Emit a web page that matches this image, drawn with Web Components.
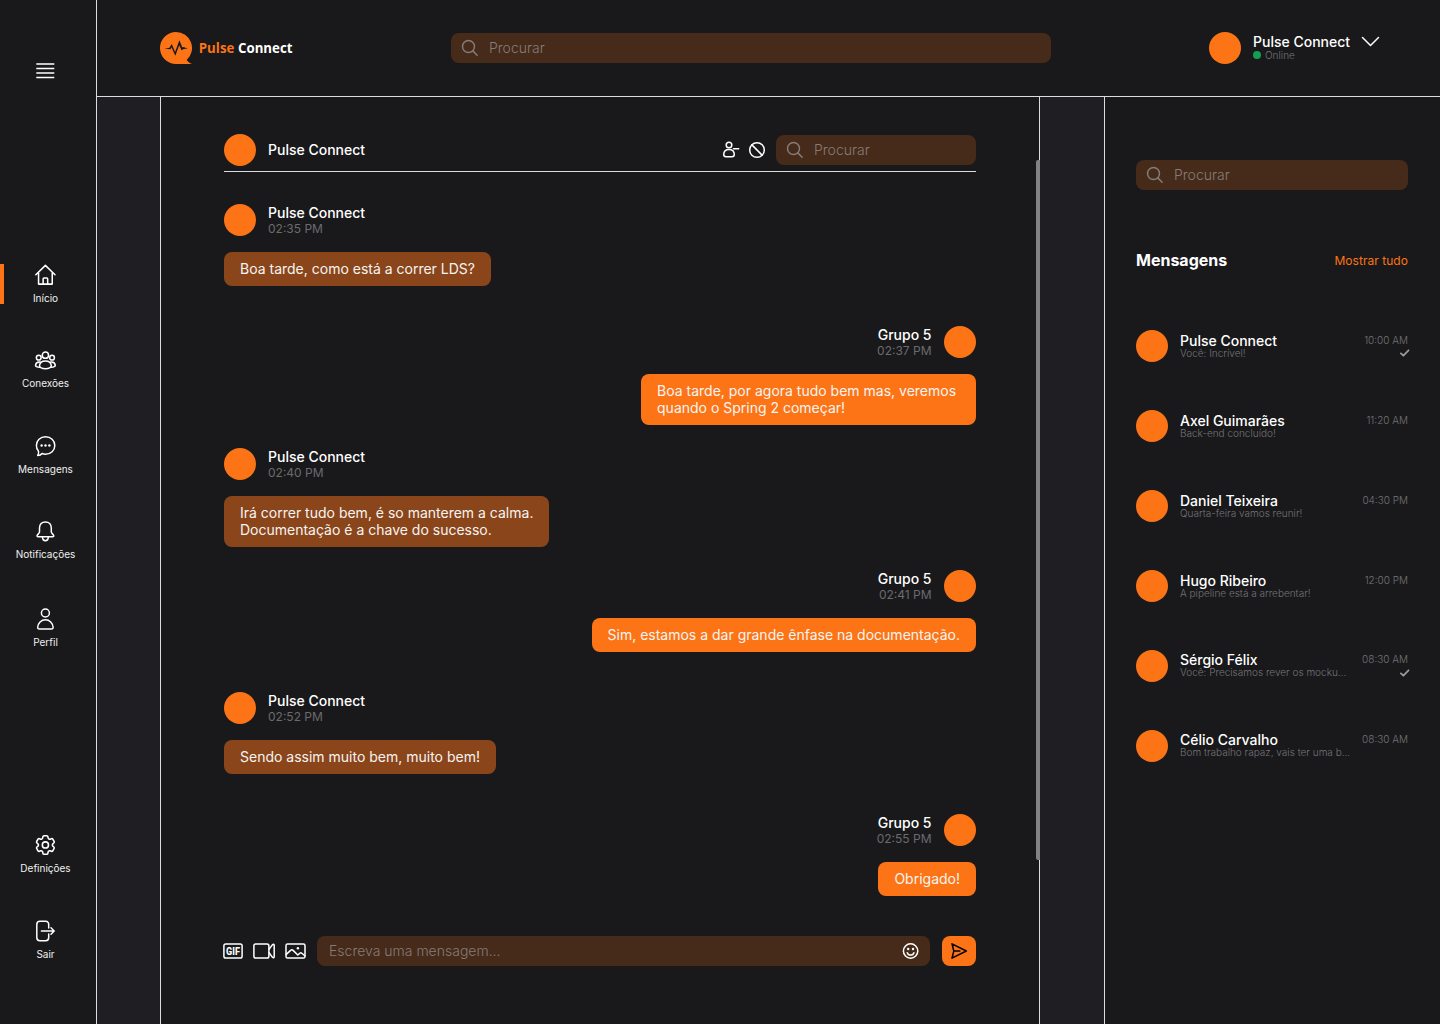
<!DOCTYPE html>
<html lang="pt">
<head>
<meta charset="utf-8">
<title>Pulse Connect</title>
<style>
html,body{margin:0;height:100%;background:#19191b}
body{--orange:#fc7416;--bg:#19191b;--gutter:#1e1e23;--line:#dcdcdc;--field:#462a1a;--muted:#857c77;--dim:#747476;
font:400 14px/17px Inter,"Liberation Sans",sans-serif;color:#fff;overflow:hidden}
</style>
</head>
<body>
<pulse-app></pulse-app>
<script>
const ICONS = {
  menu: [24,24,'<path d="M3 5h18M3 9.500h18M3 14h18M3 18.500h18" stroke-width="1.5" stroke-linecap="butt"/>'],
  home: [24,24,'<g transform="translate(.6 .6) scale(.95)" stroke-width="1.6"><path d="M1.900 11.700 12 1.900l10.100 9.800M4.800 9.600v12h14.400v-12M9.600 21.300v-5.200q0-.9.9-.9h3q.9 0 .9.900v5.200"/></g>'],
  people: [24,24,'<g transform="translate(.6 1.4) scale(.95)" stroke-width="1.6"><circle cx="12" cy="6.100" r="3.300"/><circle cx="5" cy="8.700" r="2.500"/><circle cx="19" cy="8.700" r="2.500"/><path d="M12 12.200c3.500 0 5.900 2 6.200 4.800.1 2.100-2.600 3.300-6.200 3.300s-6.300-1.200-6.200-3.300c.3-2.800 2.700-4.800 6.200-4.800zM6.300 13.400c-2.600-.2-4.400 1-4.700 3.300-.1 1.200 1.500 2.100 4.300 2.200M17.700 13.400c2.600-.2 4.400 1 4.700 3.300.1 1.200-1.500 2.100-4.300 2.200"/></g>'],
  chat: [24,24,'<path d="M12.100 2.800c5.300 0 9.300 3.700 9.300 8.700s-4 8.700-9.300 8.700c-1.500 0-2.300-.2-3.500-.7-1 1.500-2.300 1.900-4.300 1.900.9-1.200 1.200-2.500.8-4.100-1.400-1.500-2.100-3.500-2.100-5.800 0-5 3.900-8.700 9.100-8.700z"/><g fill="currentColor" stroke="none"><circle cx="8.200" cy="11.500" r="1.200"/><circle cx="12.100" cy="11.500" r="1.200"/><circle cx="16" cy="11.500" r="1.200"/></g>'],
  bell: [24,24,'<path d="M12 2.900c-3.600 0-5.900 2.500-5.900 6V13c0 1.500-2.500 2.300-2.500 4.100 0 .5.400.7 1 .7h14.800c.6 0 1-.2 1-.7 0-1.800-2.500-2.600-2.500-4.100V8.900c0-3.500-2.300-6-5.900-6zM9 18.300c.2 2.300 1.300 3.500 3 3.500s2.800-1.200 3-3.500"/>'],
  user: [24,24,'<circle cx="12" cy="6" r="4"/><path d="M12 12.800c4.200 0 7.400 3.200 7.700 7.400.1 1.100-.5 1.700-1.600 1.700H5.900c-1.100 0-1.700-.6-1.600-1.700.3-4.200 3.500-7.400 7.700-7.400z"/>'],
  gear: [24,24,'<g transform="translate(-.4 -.4) scale(1.033)"><circle cx="12" cy="12" r="3"/><path d="M9.594 3.940c.09-.542.56-.94 1.110-.94h2.593c.55 0 1.020.398 1.110.94l.213 1.281c.063.374.313.686.645.87.074.04.147.083.22.127.325.196.72.257 1.075.124l1.217-.456a1.125 1.125 0 0 1 1.370.49l1.296 2.247a1.125 1.125 0 0 1-.26 1.431l-1.003.827c-.293.241-.438.613-.43.992a7.723 7.723 0 0 1 0 .255c-.008.378.137.75.43.991l1.004.827c.424.35.534.955.26 1.430l-1.298 2.247a1.125 1.125 0 0 1-1.369.491l-1.217-.456c-.355-.133-.75-.072-1.076.124a6.470 6.470 0 0 1-.22.128c-.331.183-.581.495-.644.869l-.213 1.281c-.09.543-.56.94-1.110.94h-2.594c-.55 0-1.019-.398-1.110-.94l-.213-1.281c-.062-.374-.312-.686-.644-.87a6.520 6.520 0 0 1-.22-.127c-.325-.196-.72-.257-1.076-.124l-1.217.456a1.125 1.125 0 0 1-1.369-.49l-1.297-2.247a1.125 1.125 0 0 1 .26-1.431l1.004-.827c.292-.24.437-.613.43-.991a6.932 6.932 0 0 1 0-.255c.007-.38-.138-.751-.43-.992l-1.004-.827a1.125 1.125 0 0 1-.26-1.430l1.297-2.247a1.125 1.125 0 0 1 1.370-.491l1.216.456c.356.133.751.072 1.076-.124.072-.044.146-.086.22-.128.332-.183.582-.495.644-.869l.214-1.280Z"/></g>'],
  exit: [24,24,'<path d="M15.300 9V5.500c0-2-1-3.200-3-3.200H6.500c-2 0-3.100 1.200-3.100 3.200v13c0 2 1.100 3.200 3.100 3.200h5.800c2 0 3-1.200 3-3.200V15M8 12h12.500M17.600 8.800l3.200 3.200-3.200 3.200"/>'],
  search: [18,18,'<circle cx="7.500" cy="7.500" r="6"/><path d="m11.800 11.900 4.300 4.300"/>'],
  chevron: [20,12,'<path d="m1.500 1.500 8 8 8-8"/>'],
  remove: [18,18,'<circle cx="7" cy="4" r="2.800"/><path d="M7 8.500c3 0 5.200 2 5.300 5 0 1.500-.9 2.200-2.300 2.200H4c-1.400 0-2.300-.7-2.300-2.200.1-3 2.300-5 5.300-5zM11.500 7.700h5.200"/>'],
  block: [18,18,'<circle cx="9" cy="9" r="7.300"/><path d="m3.900 3.900 10.200 10.200"/>'],
  gif: [22,18,'<rect x="1.900" y="2" width="18.200" height="14" rx="1.800"/><text x="11" y="12.700" text-anchor="middle" font-family="Roboto,sans-serif" font-weight="800" font-size="10.200" textLength="13.800" lengthAdjust="spacingAndGlyphs" fill="currentColor" stroke="none">GIF</text>'],
  video: [24,18,'<rect x="1.900" y="1.900" width="15" height="14.200" rx="1.800"/><path d="m17.100 7.200 3.200-4.300c.9-1 1.900-.9 1.900.3v11.600c0 1.200-1 1.300-1.900.3l-3.200-4.300"/>'],
  image: [22,18,'<g transform="translate(.5 0)"><rect x="1.500" y="2" width="19" height="14" rx="1.600"/><path d="m1.800 12.400 4.300-4c.8-.8 1.700-.8 2.500 0l4.700 4.600 2-1.800c.7-.6 1.400-.6 2 0l3 2.600"/><circle cx="13.400" cy="6.300" r="1.200" fill="currentColor" stroke="none"/></g>'],
  smile: [18,18,'<g transform="translate(-.4 0)"><circle cx="9" cy="9" r="7.200"/><path d="M5.700 10.700c.5 1.500 1.800 2.400 3.300 2.400s2.800-.9 3.300-2.400"/><circle cx="6.600" cy="7" r="1.200" fill="currentColor" stroke="none"/><circle cx="11.400" cy="7" r="1.200" fill="currentColor" stroke="none"/></g>'],
  send: [18,18,'<path d="M2 1.800 16.300 9 2 16.200 3.800 9zM4.300 9h5.600"/>'],
  check: [10,8,'<path d="m.9 4.400 2.500 2.300L8.500 1.300" stroke-width="1.800"/>']
};

class Base extends HTMLElement {
  connectedCallback() {
    if (this.shadowRoot) return;
    const t = document.createElement('template');
    t.innerHTML = this.render();
    this.attachShadow({mode: 'open'}).append(t.content.cloneNode(true));
  }
  a(name) { return this.getAttribute(name) || ''; }
}
const define = (name, render) => customElements.define(name, class extends Base { render() { return render(this); } });

define('pulse-icon', e => {
  const [w, h, body] = ICONS[e.a('name')];
  return `<style>:host{display:block;flex:none;width:${w}px;height:${h}px}svg{display:block}</style>
  <svg width="${w}" height="${h}" viewBox="0 0 ${w} ${h}" fill="none" stroke="currentColor" stroke-width="1.5" stroke-linecap="round" stroke-linejoin="round">${body}</svg>`;
});

define('pulse-avatar', () => `<style>:host{display:block;flex:none;width:32px;height:32px;border-radius:50%;background:var(--orange)}</style>`);

define('pulse-logo', () => `<style>:host{display:block;flex:none;width:134px;height:32px}svg{display:block}text{font-family:"Open Sans",sans-serif;font-weight:700;font-size:13.500px}</style>
<svg width="134" height="32" viewBox="0 0 134 32"><path d="M16 0a16 16 0 0 1 10.700 27.900C28 29.500 29.500 31 32 32H16A16 16 0 0 1 16 0z" fill="#fc7416"/>
<path d="M4.500 16.700 9.500 15.700 11.700 12 15.100 20 19.400 8.300 22.300 15.500 23.300 14.900 27.700 16.600 23.700 17 21.600 18.200 19.200 13.300 15.300 23.700 11.500 15.300 10.500 17.300Z" fill="#19191b"/>
<text x="38.800" y="21" fill="#fc7416" textLength="35.500" lengthAdjust="spacingAndGlyphs">Pulse</text>
<text x="78" y="21" fill="#fff" textLength="54.500" lengthAdjust="spacingAndGlyphs">Connect</text></svg>`);

define('pulse-search', () => `<style>:host{display:flex;flex:none;align-items:center;gap:10px;height:30px;box-sizing:border-box;padding:0 10px;border-radius:8px;background:var(--field);color:var(--muted)}span{font-weight:300;margin-bottom:1px}</style>
<pulse-icon name="search"></pulse-icon><span><slot></slot></span>`);

define('nav-item', e => `<style>:host{display:flex;flex-direction:column;align-items:center;height:40px;box-sizing:border-box;padding-right:9px;font-size:10px;line-height:12px;border-left:4px solid transparent;width:100%}
:host([active]){border-color:var(--orange)}pulse-icon{margin:-1px 1px 5px 0;transform:translateX(.4px)}span{color:#f0f0f0}</style>
<pulse-icon name="${e.a('icon')}"></pulse-icon><span><slot></slot></span>`);

define('pulse-sidebar', () => `<style>:host{display:flex;flex-direction:column;width:96px;height:1024px;box-sizing:content-box;border-right:1px solid var(--line);background:var(--bg)}
.menu{padding:59px 6px 0 0;height:205px;box-sizing:border-box;display:flex;justify-content:center;margin-bottom:59px}.menu pulse-icon{transform:translateX(.3px)}
nav{display:flex;flex-direction:column;gap:45.250px}.p{margin-top:3px}.b{margin-top:186px;gap:46px}</style>
<div class="menu"><pulse-icon name="menu"></pulse-icon></div>
<nav><nav-item active icon="home">Início</nav-item><nav-item icon="people">Conexões</nav-item><nav-item icon="chat">Mensagens</nav-item><nav-item icon="bell">Notificações</nav-item><nav-item class="p" icon="user">Perfil</nav-item></nav>
<nav class="b"><nav-item icon="gear">Definições</nav-item><nav-item icon="exit">Sair</nav-item></nav>`);

define('pulse-profile', () => `<style>:host{display:flex;flex:none;gap:12px;white-space:nowrap}.t{padding-top:1px}.n{font-weight:500}
.s{display:flex;align-items:center;gap:4px;font-size:10px;line-height:12px;font-weight:300;margin-top:-1px;color:var(--dim)}i{width:8px;height:8px;border-radius:50%;background:#149e55}pulse-icon{margin:4px 0 0 -1px}</style>
<pulse-avatar></pulse-avatar><div class="t"><div class="n">Pulse Connect</div><div class="s"><i></i><span>Online</span></div></div><pulse-icon name="chevron"></pulse-icon>`);

define('pulse-topbar', () => `<style>:host{display:flex;align-items:flex-start;height:64px;padding:32px 40px 0 63px;box-sizing:content-box;border-bottom:1px solid var(--line);background:var(--bg)}
pulse-search{width:600px;margin:1px 0 0 157px}pulse-profile{margin-left:158px}</style>
<pulse-logo></pulse-logo><pulse-search>Procurar</pulse-search><pulse-profile></pulse-profile>`);

define('chat-message', e => `<style>:host{display:flex;flex-direction:column;align-items:flex-start;gap:16px;height:122px}
.h{display:flex;gap:12px}.n{font-weight:500}.t{font-size:12px;line-height:15px;color:#6b6b6d}
.b{background:#8a461a;border-radius:8px;padding:8px 16px 9px;white-space:pre;color:#f6f4f3}
:host([own]){align-items:flex-end}:host([own]) .h{flex-direction:row-reverse;gap:12.500px;text-align:right}:host([own]) .b{background:var(--orange)}</style>
<div class="h"><pulse-avatar></pulse-avatar><div><div class="n">${e.a('name')}</div><div class="t">${e.a('time')}</div></div></div><div class="b"><slot></slot></div>`);

define('chat-header', () => `<style>:host{display:flex;align-items:flex-start;height:37px;border-bottom:1px solid var(--line)}
.n{font-weight:500;margin:7px auto 0 12px}.i{display:flex;gap:8px;margin:7px 10px 0 0}pulse-search{width:200px;margin-top:1px}</style>
<pulse-avatar></pulse-avatar><div class="n">Pulse Connect</div><div class="i"><pulse-icon name="remove"></pulse-icon><pulse-icon name="block"></pulse-icon></div><pulse-search>Procurar</pulse-search>`);

define('chat-composer', () => `<style>:host{display:flex;align-items:center;height:30px}.g{display:flex;gap:8px;margin-left:-2px}
.f{display:flex;align-items:center;justify-content:space-between;width:613px;height:30px;box-sizing:border-box;border-radius:8px;background:var(--field);padding:0 10px 0 12px;margin:0 12px 0 11px}.f span{color:var(--muted);font-weight:300;margin-bottom:1px}
button{all:unset;display:flex;align-items:center;justify-content:center;width:34px;height:30px;border-radius:8px;background:var(--orange);color:#000}</style>
<div class="g"><pulse-icon name="gif"></pulse-icon><pulse-icon name="video"></pulse-icon><pulse-icon name="image"></pulse-icon></div>
<div class="f"><span>Escreva uma mensagem...</span><pulse-icon name="smile"></pulse-icon></div><button aria-label="Enviar"><pulse-icon name="send"></pulse-icon></button>`);

define('pulse-chat', () => `<style>:host{display:block;position:relative;width:752px;height:927px;box-sizing:content-box;padding:0 63px;border:solid var(--line);border-width:0 1px;background:var(--bg)}
chat-header{padding-top:37px}.m{padding-top:32px}
.bar{position:absolute;right:-1px;top:63px;width:4px;height:700px;background:#828282;border-radius:2px 0 0 2px}</style>
<chat-header></chat-header><div class="m">
<chat-message name="Pulse Connect" time="02:35 PM">Boa tarde, como está a correr LDS?</chat-message>
<chat-message own name="Grupo 5" time="02:37 PM">Boa tarde, por agora tudo bem mas, veremos 
quando o Spring 2 começar!</chat-message>
<chat-message name="Pulse Connect" time="02:40 PM">Irá correr tudo bem, é so manterem a calma.
Documentação é a chave do sucesso.</chat-message>
<chat-message own name="Grupo 5" time="02:41 PM">Sim, estamos a dar grande ênfase na documentação.</chat-message>
<chat-message name="Pulse Connect" time="02:52 PM">Sendo assim muito bem, muito bem!</chat-message>
<chat-message own name="Grupo 5" time="02:55 PM">Obrigado!</chat-message></div>
<chat-composer></chat-composer><div class="bar"></div>`);

define('contact-row', e => `<style>:host{display:flex;gap:12px;height:80px;white-space:nowrap}.t{padding-top:2px;flex:1;min-width:0}.n{font-weight:500}
.s{font-size:10px;line-height:12px;font-weight:300;margin-top:-2px;color:var(--dim)}
.r{flex:none;padding-top:4px;display:flex;flex-direction:column;align-items:flex-end;font-size:10px;line-height:12px;font-weight:300;color:var(--dim)}.r pulse-icon{margin:3px -2px 0 0;color:#98989a}
:host([up]) .t{padding-top:1px}:host([up]) .r{padding-top:3px}:host([up]) .r pulse-icon{margin-top:4px}</style>
<pulse-avatar></pulse-avatar><div class="t"><div class="n">${e.a('name')}</div><div class="s"><slot></slot></div></div>
<div class="r"><span>${e.a('time')}</span>${e.hasAttribute('sent') ? '<pulse-icon name="check"></pulse-icon>' : ''}</div>`);

define('pulse-contacts', () => `<style>:host{display:block;width:272px;height:927px;padding:0 32px 0 31px;border-left:1px solid var(--line);background:var(--bg)}
pulse-search{margin-top:63px}.h{display:flex;justify-content:space-between;align-items:center;height:20px;margin:60px 0}
b{font-size:16px;line-height:20px;font-weight:700}.h span{font-size:12px;line-height:15px;letter-spacing:.05px;color:var(--orange)}</style>
<pulse-search>Procurar</pulse-search><div class="h"><b>Mensagens</b><span>Mostrar tudo</span></div>
<contact-row sent name="Pulse Connect" time="10:00 AM">Você: Incrível!</contact-row>
<contact-row name="Axel Guimarães" time="11:20 AM">Back-end concluído!</contact-row>
<contact-row name="Daniel Teixeira" time="04:30 PM">Quarta-feira vamos reunir!</contact-row>
<contact-row name="Hugo Ribeiro" time="12:00 PM">A pipeline está a arrebentar!</contact-row>
<contact-row up sent name="Sérgio Félix" time="08:30 AM">Você: Precisamos rever os mocku...</contact-row>
<contact-row up name="Célio Carvalho" time="08:30 AM">Bom trabalho rapaz, vais ter uma b...</contact-row>`);

define('pulse-app', () => `<style>:host{display:flex;width:1440px;height:1024px;background:var(--gutter)}
.c{flex:1;display:flex;flex-direction:column}.r{display:flex;justify-content:space-between;padding-left:63px}pulse-sidebar{flex:none}</style>
<pulse-sidebar></pulse-sidebar><div class="c"><pulse-topbar></pulse-topbar><div class="r"><pulse-chat></pulse-chat><pulse-contacts></pulse-contacts></div></div>`);
</script>
</body>
</html>
